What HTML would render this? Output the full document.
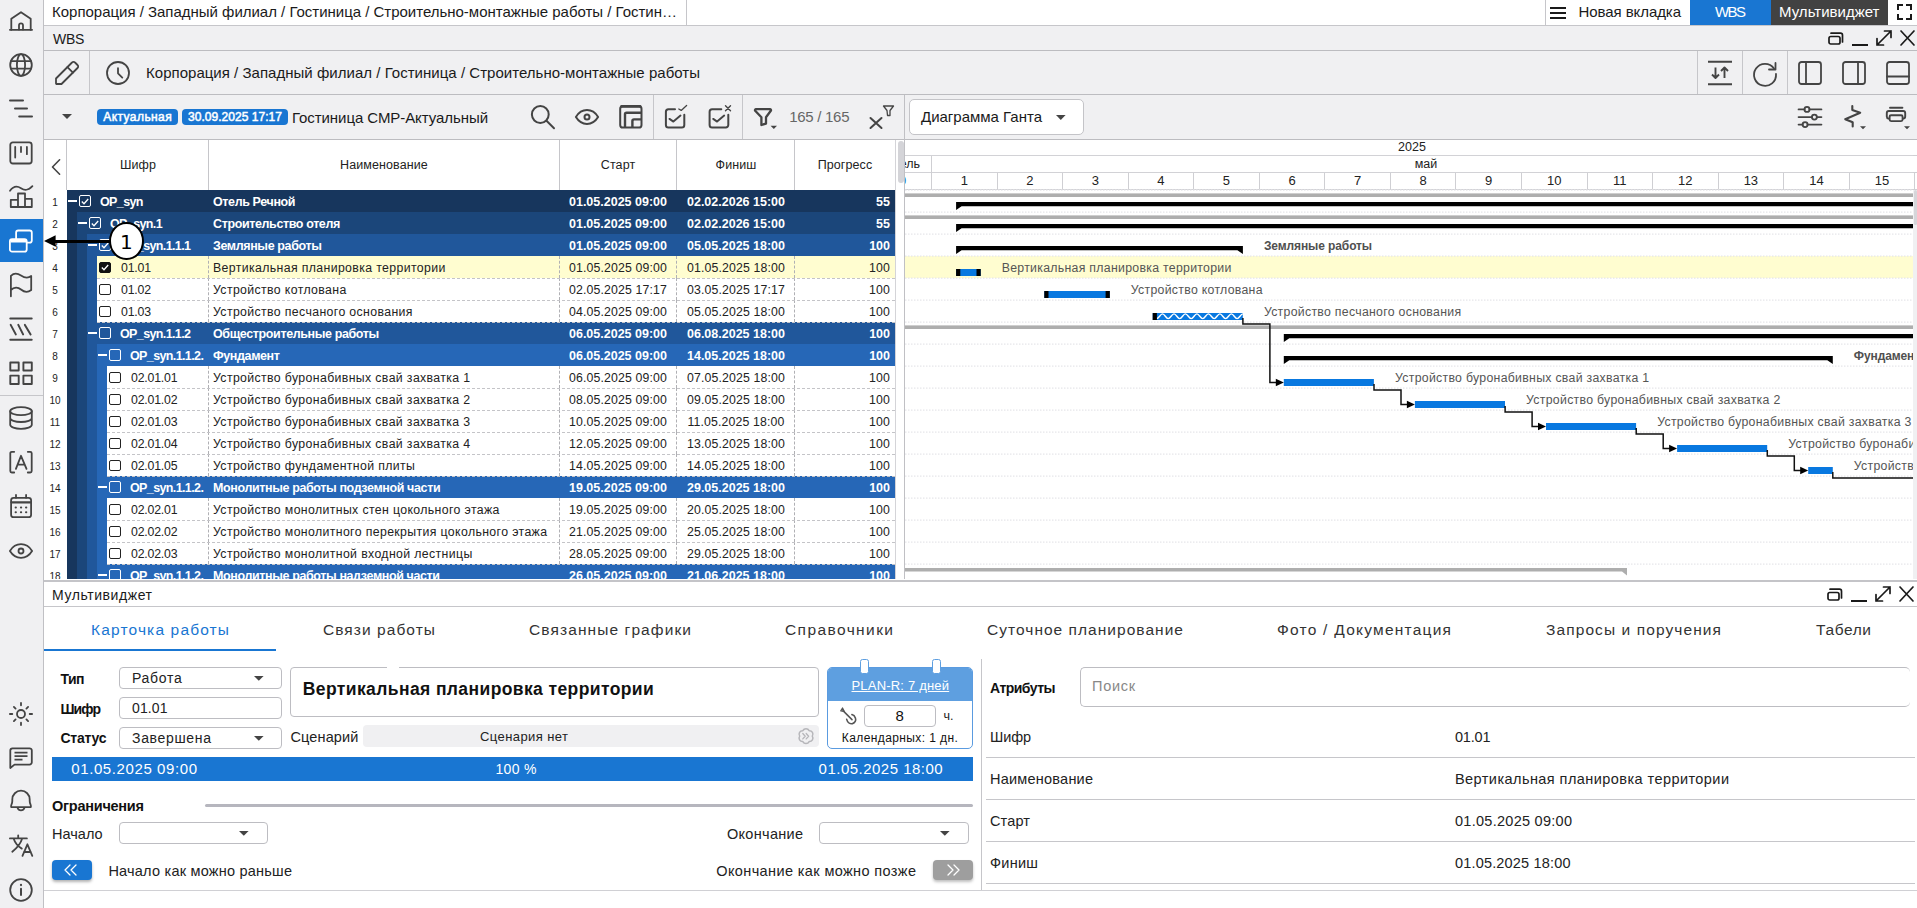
<!DOCTYPE html><html lang="ru"><head><meta charset="utf-8"><title>WBS</title><style>
*{box-sizing:border-box;margin:0;padding:0}
html,body{width:1917px;height:908px;overflow:hidden;background:#fff}
body{font-family:"Liberation Sans",sans-serif;color:#1a1a1a;position:relative;font-size:13px}
.a{position:absolute}
.t{position:absolute;white-space:pre;line-height:1}
.bg{background:#f0f0f2}
.ln{position:absolute;background:#c6c6ca}
svg{position:absolute;overflow:visible}
.ic{fill:none;stroke:#444;stroke-width:1.8;stroke-linecap:round;stroke-linejoin:round}
.row{position:absolute;left:44px;width:851px;height:22px}
.c{position:absolute;top:0.5px;height:22px;line-height:22px;white-space:pre;font-size:12.3px}
.b{font-weight:700;color:#fff;font-size:12.5px;letter-spacing:-0.38px}
.b.code{letter-spacing:-0.62px}
.b.bd{letter-spacing:0}
.n{color:#222;letter-spacing:0.37px}
.n.code{letter-spacing:-0.2px}
.n.d{letter-spacing:0.15px}
.num{position:absolute;left:0;top:1.5px;width:22px;text-align:center;font-size:10px;line-height:22px;color:#222}
.cb{position:absolute;top:5.5px;width:12px;height:11.5px;border:1.2px solid #222;border-radius:2px;background:#fff}
.cbw{position:absolute;top:5px;width:12px;height:12px;border:1.2px solid #fff;border-radius:2px}
.inp{position:absolute;border:1px solid #bdbdc2;border-radius:4px;background:#fff}
.gl{position:absolute;white-space:pre;font-size:12.3px;letter-spacing:0.29px;line-height:14px;color:#555}
</style></head><body>
<div class="a" style="left:0px;top:0px;width:43px;height:908px;background:#f0f0f2;"></div>
<div class="a" style="left:43px;top:0px;width:1px;height:908px;background:#c0c0c4;"></div>
<div class="a" style="left:0px;top:219px;width:43px;height:43px;background:#1976d2;"></div>
<div class="a" style="left:0px;top:395px;width:43px;height:1px;background:#c6c6ca;"></div>
<svg class="ic" style="left:9px;top:8px;" width="24" height="24" viewBox="0 0 24 24"><path d="M2.3 21.8V10.8L12 4.2L21.7 10.8V21.8"/><path d="M0.9 21.8H23.1"/><path d="M10 21.5V17.3A2 2 0 0 1 14 17.3V21.5"/></svg>
<svg class="ic" style="left:9px;top:53px;" width="24" height="24" viewBox="0 0 24 24"><circle cx="12" cy="12" r="10.8"/><ellipse cx="12" cy="12" rx="4.1" ry="10.8"/><path d="M2 8.2H22M2 15.6H22"/></svg>
<svg class="ic" style="left:9px;top:96px;stroke-width:2;" width="24" height="24" viewBox="0 0 24 24"><path d="M1 4.6H14M6 12.6H18M10.2 20.6H23"/></svg>
<svg class="ic" style="left:9px;top:141px;" width="24" height="24" viewBox="0 0 24 24"><rect x="1.3" y="1.3" width="21.4" height="21.2" rx="2.5"/><path d="M6.2 6V16.5M12 6V11M17.9 6V13.2"/></svg>
<svg class="ic" style="left:9px;top:184px;" width="24" height="24" viewBox="0 0 24 24"><path d="M1 6.8C4 2.5 8 1.5 12 4.2S19 6.8 23.4 2.2"/><path d="M1.8 23V15.8H9M9 23V9.5H16V23M16 14.8H22.8V23H1.8"/></svg>
<svg class="ic" style="left:9px;top:229px;stroke:#fff;" width="24" height="24" viewBox="0 0 24 24"><rect x="7.1" y="1.5" width="15.7" height="12.1" rx="2.2"/><rect x="0.9" y="10.2" width="16.8" height="12.4" rx="2.2" fill="#1976d2"/><path d="M1.5 12.2H17" style="stroke-width:2.6;stroke-linecap:butt"/></svg>
<svg class="ic" style="left:9px;top:273px;" width="24" height="24" viewBox="0 0 24 24"><path d="M1.9 23.3V2.8C5 -0.2 8 -0.2 12 2.5S19 5.5 22.2 3V17C19 19.5 15 19 12 16.5S5 14 1.9 17"/></svg>
<svg class="ic" style="left:9px;top:317px;stroke-width:2;" width="24" height="24" viewBox="0 0 24 24"><path d="M1.3 1.5H22.7M1.3 22.7H22.7M1.7 7.9L6.8 17.4M9.3 7.9L14.1 17.4M15.9 7.9L21.6 17.4"/></svg>
<svg class="ic" style="left:9px;top:361px;stroke-width:1.9;" width="24" height="24" viewBox="0 0 24 24"><rect x="1.3" y="1.5" width="8.4" height="8"/><rect x="14.4" y="1.5" width="8.4" height="8"/><rect x="1.3" y="14.6" width="8.4" height="8.4"/><rect x="14.4" y="14.6" width="8.4" height="8.4"/></svg>
<svg class="ic" style="left:9px;top:406px;" width="24" height="24" viewBox="0 0 24 24"><ellipse cx="12" cy="5.2" rx="10.8" ry="4"/><path d="M1.2 5.2V18.8C1.2 21 6 22.8 12 22.8S22.8 21 22.8 18.8V5.2M1.2 12C1.2 14.2 6 16 12 16S22.8 14.2 22.8 12"/></svg>
<svg class="ic" style="left:9px;top:450px;" width="24" height="24" viewBox="0 0 24 24"><path d="M5.2 1.8H2.8A1.5 1.5 0 0 0 1.3 3.3V21A1.5 1.5 0 0 0 2.8 22.5H5.2M18.8 1.8H21.2A1.5 1.5 0 0 1 22.7 3.3V21A1.5 1.5 0 0 1 21.2 22.5H18.8M6.9 18.8L12 5.8L17.5 18.8M8.6 14.6H15.8"/></svg>
<svg class="ic" style="left:9px;top:494px;" width="24" height="24" viewBox="0 0 24 24"><rect x="2.1" y="3.8" width="20" height="19.4" rx="2.5"/><path d="M2.5 8.3H21.7" style="stroke-width:2.2"/><path d="M7 0.9V3.8M17.1 0.9V3.8"/><path d="M6.6 13.5H6.9M11.9 13.5H12.2M17 13.5H17.3M6.6 18.2H6.9M11.9 18.2H12.2M17 18.2H17.3" style="stroke-width:2"/></svg>
<svg class="ic" style="left:9px;top:538.5px;" width="24" height="24" viewBox="0 0 24 24"><path d="M0.9 12C4 7 8 5.2 12 5.2S20 7 23.1 12C20 17 16 18.8 12 18.8S4 17 0.9 12Z"/><circle cx="12" cy="12" r="2.5"/></svg>
<svg class="ic" style="left:9px;top:701.7px;" width="24" height="24" viewBox="0 0 24 24"><circle cx="12" cy="12" r="4"/><path d="M12 0.9V3.3M12 20.7V23.1M0.9 12H3.3M20.7 12H23.1M4.9 4.9L6.6 6.6M17.4 17.4L19.1 19.1M4.9 19.1L6.6 17.4M17.4 6.6L19.1 4.9"/></svg>
<svg class="ic" style="left:9px;top:746px;" width="24" height="24" viewBox="0 0 24 24"><path d="M3.5 2.3H20.5A2.3 2.3 0 0 1 22.8 4.6V16.3A2.3 2.3 0 0 1 20.5 18.6H5.5L1.3 22V4.6A2.3 2.3 0 0 1 3.5 2.3Z"/><path d="M5.5 6.7H18.5M5.5 10.1H18.5M5.5 13.7H13.5" style="stroke-linecap:butt"/></svg>
<svg class="ic" style="left:9px;top:789px;" width="24" height="24" viewBox="0 0 24 24"><path d="M2.3 18.2C1.2 16.5 3.3 15.5 3.3 12V10.4A8.7 8.7 0 0 1 20.7 10.4V12C20.7 15.5 22.8 16.5 21.7 18.2Z"/><path d="M8.6 19A3.6 3.6 0 0 0 15.4 19"/></svg>
<svg class="ic" style="left:9px;top:834px;" width="24" height="24" viewBox="0 0 24 24"><path d="M0.9 4.4H17.9M9.2 1.3V4.4M4.6 4.6C6 9 9 12.5 12.8 14.6M13.2 4.6C11.5 10 7.5 14.5 3.3 17.8"/><path d="M13.5 21.9L18.4 10.3L23.3 21.9M15 18H21.8"/></svg>
<svg class="ic" style="left:9px;top:878px;" width="24" height="24" viewBox="0 0 24 24"><circle cx="12" cy="12" r="10.8"/><path d="M12 10.8V17" style="stroke-width:2"/><path d="M12 6.9V7.1" style="stroke-width:2.2"/></svg>
<div class="a" style="left:44px;top:0px;width:1873px;height:25px;background:#fff;"></div>
<div class="a" style="left:44px;top:25px;width:1873px;height:1px;background:#c6c6ca;"></div>
<div class="t" style="left:52.0px;top:4.3px;font-size:15px;color:#1a1a1a;font-weight:400;letter-spacing:-0.015px;">Корпорация / Западный филиал / Гостиница / Строительно-монтажные работы / Гостин…</div>
<div class="a" style="left:686px;top:0px;width:1px;height:25px;background:#c6c6ca;"></div>
<div class="a" style="left:1545px;top:0px;width:1px;height:25px;background:#c6c6ca;"></div>
<div class="a" style="left:1550px;top:7px;width:16px;height:2px;background:#1a1a1a;"></div>
<div class="a" style="left:1550px;top:12px;width:16px;height:2px;background:#1a1a1a;"></div>
<div class="a" style="left:1550px;top:17px;width:16px;height:2px;background:#1a1a1a;"></div>
<div class="t" style="left:1578.5px;top:4.3px;font-size:15px;color:#1a1a1a;font-weight:400;letter-spacing:-0.074px;">Новая вкладка</div>
<div class="a" style="left:1690px;top:0px;width:81px;height:25px;background:#1976d2;"></div>
<div class="t" style="left:1715.0px;top:4.3px;font-size:15px;color:#fff;font-weight:400;letter-spacing:-1.584px;">WBS</div>
<div class="a" style="left:1771px;top:0px;width:117px;height:25px;background:#424242;"></div>
<div class="t" style="left:1779.0px;top:4.3px;font-size:15px;color:#fff;font-weight:400;letter-spacing:0.015px;">Мультивиджет</div>
<svg class="ic" style="left:1897px;top:4px;stroke:#1a1a1a;stroke-width:2;stroke-linecap:butt;stroke-linejoin:miter" width="15" height="16" viewBox="0 0 15 16"><path d="M1 6V1H6M9 1H14V6M14 10V15H9M6 15H1V10"/></svg>
<div class="a" style="left:44px;top:26px;width:1873px;height:24px;background:#f0f0f2;"></div>
<div class="a" style="left:44px;top:50px;width:1873px;height:1px;background:#bcbcc0;"></div>
<div class="t" style="left:53px;top:32px;font-size:14px;color:#1a1a1a;font-weight:400;letter-spacing:-0.3px;">WBS</div>
<svg class="ic" style="left:1828px;top:32px;stroke:#1a1a1a;stroke-width:1.7" width="16" height="13" viewBox="0 0 16 13"><rect x="1" y="4.5" width="11" height="7.5" rx="1.8"/><path d="M3 1.2H12.5A2 2 0 0 1 14.5 3.2V10"/></svg>
<div class="a" style="left:1852px;top:44.2px;width:16px;height:1.7px;background:#1a1a1a;"></div>
<svg class="ic" style="left:1876px;top:30px;stroke:#1a1a1a;stroke-width:1.7;stroke-linejoin:miter" width="16" height="16" viewBox="0 0 16 16"><path d="M1 15L15 1M8.5 1H15V7.5M1 8.5V15H7.5"/></svg>
<svg class="ic" style="left:1900px;top:30px;stroke:#1a1a1a;stroke-width:1.7" width="15" height="16" viewBox="0 0 15 16"><path d="M1 1L14 15M14 1L1 15"/></svg>
<div class="a" style="left:44px;top:51px;width:1873px;height:43px;background:#f0f0f2;"></div>
<div class="a" style="left:44px;top:94px;width:1873px;height:1px;background:#bcbcc0;"></div>
<div class="a" style="left:89px;top:51px;width:1px;height:43px;background:#c6c6ca;"></div>
<svg class="ic" style="left:55px;top:61px;" width="24" height="24" viewBox="0 0 24 24"><path d="M1 22.5V17.5L17 1.5A2 2 0 0 1 20 1.5L22.5 4A2 2 0 0 1 22.5 7L6.5 23H1.5Z"/><path d="M12.4 6.1L17.9 11.6"/></svg>
<svg class="ic" style="left:106px;top:61px;" width="24" height="24" viewBox="0 0 24 24"><circle cx="12" cy="12" r="11"/><path d="M12 7.2V12.3L16.3 16.6"/></svg>
<div class="t" style="left:146px;top:65px;font-size:15px;color:#1a1a1a;font-weight:400;letter-spacing:0.026px;">Корпорация / Западный филиал / Гостиница / Строительно-монтажные работы</div>
<div class="a" style="left:1697px;top:51px;width:1px;height:43px;background:#c6c6ca;"></div>
<div class="a" style="left:1742px;top:51px;width:1px;height:43px;background:#c6c6ca;"></div>
<div class="a" style="left:1787px;top:51px;width:1px;height:43px;background:#c6c6ca;"></div>
<svg class="ic" style="left:1708px;top:61px;stroke-linecap:butt;stroke-width:1.9" width="24" height="24" viewBox="0 0 24 24"><path d="M0 0.8H24M0 23.2H24"/><path d="M7.5 6.5V16.5M4 13.5L7.5 17L11 13.5M16.5 17V7M13 10L16.5 6.5L20 10"/></svg>
<svg class="ic" style="left:1753px;top:61.5px;" width="24" height="24" viewBox="0 0 24 24"><path d="M21 6.5A11 11 0 1 0 23 12"/><path d="M22.5 1V7.5H16"/></svg>
<svg class="ic" style="left:1798px;top:61px;" width="24" height="24" viewBox="0 0 24 24"><rect x="1" y="1" width="22" height="22" rx="2.5"/><path d="M8 1V23"/></svg>
<svg class="ic" style="left:1842px;top:61px;" width="24" height="24" viewBox="0 0 24 24"><rect x="1" y="1" width="22" height="22" rx="2.5"/><path d="M16 1V23"/></svg>
<svg class="ic" style="left:1886px;top:61px;" width="24" height="24" viewBox="0 0 24 24"><rect x="1" y="1" width="22" height="22" rx="2.5"/><path d="M1 15.5H23"/></svg>
<div class="a" style="left:44px;top:95px;width:1873px;height:44px;background:#f0f0f2;"></div>
<div class="a" style="left:44px;top:139px;width:1873px;height:1px;background:#bcbcc0;"></div>
<svg class="" style="left:62px;top:114px;fill:#444" width="10" height="5" viewBox="0 0 10 5"><path d="M0 0H10L5 5Z"/></svg>
<div class="a" style="left:97px;top:109px;width:81px;height:16px;background:#1976d2;border-radius:4px"></div>
<div class="t" style="left:103.3px;top:111.1px;font-size:12px;color:#fff;font-weight:400;letter-spacing:0.421px;-webkit-text-stroke:0.5px #fff">Актуальная</div>
<div class="a" style="left:182px;top:109px;width:106px;height:16px;background:#1976d2;border-radius:4px"></div>
<div class="t" style="left:188.1px;top:111.1px;font-size:12px;color:#fff;font-weight:400;letter-spacing:0.025px;-webkit-text-stroke:0.5px #fff">30.09.2025 17:17</div>
<div class="t" style="left:292.0px;top:110.2px;font-size:15px;color:#1a1a1a;font-weight:400;letter-spacing:-0.069px;">Гостиница СМР-Актуальный</div>
<svg class="ic" style="left:531px;top:105px;stroke-width:2" width="24" height="24" viewBox="0 0 24 24"><circle cx="9.3" cy="9.5" r="8.4"/><path d="M15.5 15.7L23 23.2"/></svg>
<svg class="ic" style="left:575px;top:104.8px;stroke-width:2" width="24" height="24" viewBox="0 0 24 24"><path d="M0.9 12C4 7 8 5.1 12 5.1S20 7 23.1 12C20 17 16 18.9 12 18.9S4 17 0.9 12Z"/><circle cx="12" cy="12" r="2.5"/></svg>
<svg class="ic" style="left:617px;top:103px;stroke-width:2" width="28" height="28" viewBox="617 103 28 28"><rect x="620.2" y="106.2" width="21.3" height="21.3" rx="2.6"/><path d="M621.5 106.4H640.2" style="stroke-width:2.6"/><path d="M625 127.3V114.3A1.6 1.6 0 0 1 626.6 112.7H641.3M632.4 127.3V121A1.6 1.6 0 0 1 634 119.4H641.3" style="stroke-width:2.4;stroke-linecap:butt"/></svg>
<div class="a" style="left:653px;top:95px;width:1px;height:44px;background:#c6c6ca;"></div>
<svg class="ic" style="left:662px;top:102px;" width="28" height="28" viewBox="662 102 28 28"><path d="M675 109.2H668.4A2.5 2.5 0 0 0 665.9 111.7V125A2.5 2.5 0 0 0 668.4 127.5H681.8A2.5 2.5 0 0 0 684.3 125V114.8" style="stroke-width:2"/><path d="M669.5 118.9L673.4 121.6L680.5 115.6" style="stroke-width:1.9"/><path d="M678.8 109L681.2 110.4L686.6 105.5" style="stroke-width:1.3"/></svg>
<svg class="ic" style="left:706px;top:102px;" width="28" height="28" viewBox="706 102 28 28"><path d="M721.3 109.2H712.1A2.5 2.5 0 0 0 709.6 111.7V125A2.5 2.5 0 0 0 712.1 127.5H725.8A2.5 2.5 0 0 0 728.3 125V114.8" style="stroke-width:2"/><path d="M713.2 118.9L717.1 121.6L724.2 115.6" style="stroke-width:1.9"/><path d="M725.5 105.7L730.5 110.7M730.5 105.7L725.5 110.7" style="stroke-width:1.4"/></svg>
<div class="a" style="left:742px;top:95px;width:1px;height:44px;background:#c6c6ca;"></div>
<svg class="ic" style="left:750px;top:104px;" width="30" height="28" viewBox="750 104 30 28"><path d="M756 109.2H770A1 1 0 0 1 770.8 110.8L766 117.3V123.6L761.4 125V117.3L755.2 110.8A1 1 0 0 1 756 109.2Z" style="stroke-width:2.3"/><path d="M770.6 125.7H777L773.8 129Z" fill="#444" stroke="none"/></svg>
<div class="t" style="left:789.2px;top:109.1px;font-size:15px;color:#666;font-weight:400;letter-spacing:-0.282px;">165 / 165</div>
<svg class="ic" style="left:869px;top:105px;" width="26" height="24" viewBox="0 0 26 24"><path d="M1.5 13L12.5 23M12.5 13L1.5 23" style="stroke-width:2"/><path d="M14.5 1H24.5L21 5.5V10.5H18.5L18 5.5Z" style="stroke-width:1.3"/></svg>
<div class="a" style="left:895px;top:95px;width:10px;height:44px;background:#f0f0f2;"></div>
<div class="a" style="left:904px;top:95px;width:1px;height:485px;background:#c0c0c4;"></div>
<div class="inp" style="left:909px;top:99px;width:175px;height:36px;border-color:#c4c4c8;border-radius:5px"></div>
<div class="t" style="left:921.0px;top:109.0px;font-size:15px;color:#1a1a1a;font-weight:400;letter-spacing:-0.009px;">Диаграмма Ганта</div>
<svg class="" style="left:1056px;top:115.2px;fill:#444" width="9.6" height="5" viewBox="0 0 9.6 5"><path d="M0 0H9.6L4.8 5Z"/></svg>
<svg class="ic" style="left:1796px;top:104px;stroke-width:1.9" width="28" height="26" viewBox="1796 104 28 26"><path d="M1798.6 109.4H1804.4M1809.6 109.4H1821.4M1798.6 117.1H1811.8M1817 117.1H1821.4M1798.6 124.6H1802.5M1807.7 124.6H1821.4"/><circle cx="1807" cy="109.4" r="2.5"/><circle cx="1814.4" cy="117.1" r="2.5"/><circle cx="1805.1" cy="124.6" r="2.5"/></svg>
<svg class="ic" style="left:1842px;top:103px;" width="28" height="28" viewBox="1842 103 28 28"><path d="M1852.3 106V109.9L1860.2 112.7L1845.2 119.2L1852.7 122.3V126.5" style="stroke-width:2.1"/><path d="M1860 126.2H1866L1863 129.2Z" fill="#444" stroke="none"/></svg>
<svg class="ic" style="left:1884px;top:104px;stroke-width:1.9" width="30" height="28" viewBox="1884 104 30 28"><path d="M1890 107.8H1902.4"/><path d="M1889 118.6H1888.5A2 2 0 0 1 1886.8 116.6V113A2 2 0 0 1 1888.8 111H1903.2A2 2 0 0 1 1905.2 113V116.6A2 2 0 0 1 1903.2 118.6H1903"/><rect x="1889.6" y="115.3" width="13" height="5.8" rx="1.5"/><path d="M1904 126.2H1910L1907 129.2Z" fill="#444" stroke="none"/></svg>
<div class="a" style="left:44px;top:140px;width:851px;height:50px;background:#fff;"></div>
<div class="a" style="left:66px;top:140px;width:1px;height:50px;background:#c6c6ca;"></div>
<div class="a" style="left:208px;top:140px;width:1px;height:50px;background:#c6c6ca;"></div>
<div class="a" style="left:559px;top:140px;width:1px;height:50px;background:#c6c6ca;"></div>
<div class="a" style="left:676px;top:140px;width:1px;height:50px;background:#c6c6ca;"></div>
<div class="a" style="left:794px;top:140px;width:1px;height:50px;background:#c6c6ca;"></div>
<svg class="ic" style="left:48px;top:155px;stroke-width:1.6" width="16" height="24" viewBox="48 155 16 24"><path d="M59.6 159.8L52.5 167L59.6 174.2"/></svg>
<div class="t" style="left:38px;width:200px;text-align:center;top:159px;font-size:12.5px;color:#222;letter-spacing:0.1px">Шифр</div>
<div class="t" style="left:284px;width:200px;text-align:center;top:159px;font-size:12.5px;color:#222;letter-spacing:0.1px">Наименование</div>
<div class="t" style="left:518px;width:200px;text-align:center;top:159px;font-size:12.5px;color:#222;letter-spacing:0.1px">Старт</div>
<div class="t" style="left:636px;width:200px;text-align:center;top:159px;font-size:12.5px;color:#222;letter-spacing:0.1px">Финиш</div>
<div class="t" style="left:745px;width:200px;text-align:center;top:159px;font-size:12.5px;color:#222;letter-spacing:0.1px">Прогресс</div>
<div class="a" style="left:895px;top:140px;width:1px;height:439px;background:#d4d4d8;"></div>
<div class="a" style="left:898px;top:141px;width:6px;height:42px;background:#d4d4d8;border-radius:3px"></div>
<div class="a" style="left:0;top:190px;width:905px;height:389px;overflow:hidden">
<div class="row" style="top:0px;background:#fff">
<div class="num">1</div>
<div class="a" style="left:23px;top:0;width:828px;height:22px;background:#17365d"></div>
<div class="a" style="left:24px;top:10px;width:9px;height:2px;background:#fff"></div>
<div class="cbw" style="left:35px"><svg style="left:1.2px;top:1.5px" width="8" height="7" viewBox="0 0 8 7"><path d="M0.8 3.5L3 5.8L7.2 1" fill="none" stroke="#fff" stroke-width="1.3"/></svg></div>
<div class="c b code" style="left:56px;width:107px;overflow:hidden">OP_syn</div>
<div class="c b" style="left:169px;width:345px;overflow:hidden">Отель Речной</div>
<div class="c b bd" style="left:516px;width:116px;text-align:center">01.05.2025 09:00</div>
<div class="c b bd" style="left:633px;width:118px;text-align:center">02.02.2026 15:00</div>
<div class="c b bd" style="left:751px;width:95px;text-align:right">55</div>
</div>
<div class="row" style="top:22px;background:#fff">
<div class="num">2</div>
<div class="a" style="left:23px;top:0;width:10px;height:22px;background:#17365d"></div>
<div class="a" style="left:33px;top:0;width:818px;height:22px;background:#1b467a"></div>
<div class="a" style="left:34px;top:10px;width:9px;height:2px;background:#fff"></div>
<div class="cbw" style="left:45px"><svg style="left:1.2px;top:1.5px" width="8" height="7" viewBox="0 0 8 7"><path d="M0.8 3.5L3 5.8L7.2 1" fill="none" stroke="#fff" stroke-width="1.3"/></svg></div>
<div class="c b code" style="left:66px;width:97px;overflow:hidden">OP_syn.1</div>
<div class="c b" style="left:169px;width:345px;overflow:hidden">Строительство отеля</div>
<div class="c b bd" style="left:516px;width:116px;text-align:center">01.05.2025 09:00</div>
<div class="c b bd" style="left:633px;width:118px;text-align:center">02.02.2026 15:00</div>
<div class="c b bd" style="left:751px;width:95px;text-align:right">55</div>
</div>
<div class="row" style="top:44px;background:#fff">
<div class="num">3</div>
<div class="a" style="left:23px;top:0;width:10px;height:22px;background:#17365d"></div>
<div class="a" style="left:33px;top:0;width:10px;height:22px;background:#1b467a"></div>
<div class="a" style="left:43px;top:0;width:808px;height:22px;background:#20579b"></div>
<div class="a" style="left:44px;top:10px;width:9px;height:2px;background:#fff"></div>
<div class="cbw" style="left:55px"><svg style="left:1.2px;top:1.5px" width="8" height="7" viewBox="0 0 8 7"><path d="M0.8 3.5L3 5.8L7.2 1" fill="none" stroke="#fff" stroke-width="1.3"/></svg></div>
<div class="c b code" style="left:76px;width:87px;overflow:hidden">OP_syn.1.1.1</div>
<div class="c b" style="left:169px;width:345px;overflow:hidden">Земляные работы</div>
<div class="c b bd" style="left:516px;width:116px;text-align:center">01.05.2025 09:00</div>
<div class="c b bd" style="left:633px;width:118px;text-align:center">05.05.2025 18:00</div>
<div class="c b bd" style="left:751px;width:95px;text-align:right">100</div>
</div>
<div class="row" style="top:66px;background:#fff">
<div class="num">4</div>
<div class="a" style="left:23px;top:0;width:10px;height:22px;background:#17365d"></div>
<div class="a" style="left:33px;top:0;width:10px;height:22px;background:#1b467a"></div>
<div class="a" style="left:43px;top:0;width:10px;height:22px;background:#20579b"></div>
<div class="a" style="left:53px;top:0;width:798px;height:22px;background:#fffdd0"></div>
<div class="a" style="left:53px;top:22px;width:798px;height:0;border-top:1px dashed #c4c4c8;z-index:2"></div>
<div class="a" style="left:164px;top:0;width:0;height:22px;border-left:1px dashed #b0b0b4"></div>
<div class="a" style="left:515px;top:0;width:0;height:22px;border-left:1px dashed #b0b0b4"></div>
<div class="a" style="left:632px;top:0;width:0;height:22px;border-left:1px dashed #b0b0b4"></div>
<div class="a" style="left:750px;top:0;width:0;height:22px;border-left:1px dashed #b0b0b4"></div>
<div class="cb" style="left:55px;background:#111;border-color:#111"><svg style="left:1.2px;top:1.5px" width="8" height="7" viewBox="0 0 8 7"><path d="M0.8 3.5L3 5.8L7.2 1" fill="none" stroke="#fff" stroke-width="1.3"/></svg></div>
<div class="c n code" style="left:77px;width:86px;overflow:hidden">01.01</div>
<div class="c n" style="left:169px;width:345px;overflow:hidden">Вертикальная планировка территории</div>
<div class="c n d" style="left:516px;width:116px;text-align:center">01.05.2025 09:00</div>
<div class="c n d" style="left:633px;width:118px;text-align:center">01.05.2025 18:00</div>
<div class="c n d" style="left:751px;width:95px;text-align:right">100</div>
</div>
<div class="row" style="top:88px;background:#fff">
<div class="num">5</div>
<div class="a" style="left:23px;top:0;width:10px;height:22px;background:#17365d"></div>
<div class="a" style="left:33px;top:0;width:10px;height:22px;background:#1b467a"></div>
<div class="a" style="left:43px;top:0;width:10px;height:22px;background:#20579b"></div>
<div class="a" style="left:53px;top:0;width:798px;height:22px;background:#fff"></div>
<div class="a" style="left:53px;top:22px;width:798px;height:0;border-top:1px dashed #c4c4c8;z-index:2"></div>
<div class="a" style="left:164px;top:0;width:0;height:22px;border-left:1px dashed #b0b0b4"></div>
<div class="a" style="left:515px;top:0;width:0;height:22px;border-left:1px dashed #b0b0b4"></div>
<div class="a" style="left:632px;top:0;width:0;height:22px;border-left:1px dashed #b0b0b4"></div>
<div class="a" style="left:750px;top:0;width:0;height:22px;border-left:1px dashed #b0b0b4"></div>
<div class="cb" style="left:55px"></div>
<div class="c n code" style="left:77px;width:86px;overflow:hidden">01.02</div>
<div class="c n" style="left:169px;width:345px;overflow:hidden">Устройство котлована</div>
<div class="c n d" style="left:516px;width:116px;text-align:center">02.05.2025 17:17</div>
<div class="c n d" style="left:633px;width:118px;text-align:center">03.05.2025 17:17</div>
<div class="c n d" style="left:751px;width:95px;text-align:right">100</div>
</div>
<div class="row" style="top:110px;background:#fff">
<div class="num">6</div>
<div class="a" style="left:23px;top:0;width:10px;height:22px;background:#17365d"></div>
<div class="a" style="left:33px;top:0;width:10px;height:22px;background:#1b467a"></div>
<div class="a" style="left:43px;top:0;width:10px;height:22px;background:#20579b"></div>
<div class="a" style="left:53px;top:0;width:798px;height:22px;background:#fff"></div>
<div class="a" style="left:53px;top:22px;width:798px;height:0;border-top:1px dashed #c4c4c8;z-index:2"></div>
<div class="a" style="left:164px;top:0;width:0;height:22px;border-left:1px dashed #b0b0b4"></div>
<div class="a" style="left:515px;top:0;width:0;height:22px;border-left:1px dashed #b0b0b4"></div>
<div class="a" style="left:632px;top:0;width:0;height:22px;border-left:1px dashed #b0b0b4"></div>
<div class="a" style="left:750px;top:0;width:0;height:22px;border-left:1px dashed #b0b0b4"></div>
<div class="cb" style="left:55px"></div>
<div class="c n code" style="left:77px;width:86px;overflow:hidden">01.03</div>
<div class="c n" style="left:169px;width:345px;overflow:hidden">Устройство песчаного основания</div>
<div class="c n d" style="left:516px;width:116px;text-align:center">04.05.2025 09:00</div>
<div class="c n d" style="left:633px;width:118px;text-align:center">05.05.2025 18:00</div>
<div class="c n d" style="left:751px;width:95px;text-align:right">100</div>
</div>
<div class="row" style="top:132px;background:#fff">
<div class="num">7</div>
<div class="a" style="left:23px;top:0;width:10px;height:22px;background:#17365d"></div>
<div class="a" style="left:33px;top:0;width:10px;height:22px;background:#1b467a"></div>
<div class="a" style="left:43px;top:0;width:808px;height:22px;background:#20579b"></div>
<div class="a" style="left:44px;top:10px;width:9px;height:2px;background:#fff"></div>
<div class="cbw" style="left:55px"></div>
<div class="c b code" style="left:76px;width:87px;overflow:hidden">OP_syn.1.1.2</div>
<div class="c b" style="left:169px;width:345px;overflow:hidden">Общестроительные работы</div>
<div class="c b bd" style="left:516px;width:116px;text-align:center">06.05.2025 09:00</div>
<div class="c b bd" style="left:633px;width:118px;text-align:center">06.08.2025 18:00</div>
<div class="c b bd" style="left:751px;width:95px;text-align:right">100</div>
</div>
<div class="row" style="top:154px;background:#fff">
<div class="num">8</div>
<div class="a" style="left:23px;top:0;width:10px;height:22px;background:#17365d"></div>
<div class="a" style="left:33px;top:0;width:10px;height:22px;background:#1b467a"></div>
<div class="a" style="left:43px;top:0;width:10px;height:22px;background:#20579b"></div>
<div class="a" style="left:53px;top:0;width:798px;height:22px;background:#2667b7"></div>
<div class="a" style="left:54px;top:10px;width:9px;height:2px;background:#fff"></div>
<div class="cbw" style="left:65px"></div>
<div class="c b code" style="left:86px;width:77px;overflow:hidden">OP_syn.1.1.2.</div>
<div class="c b" style="left:169px;width:345px;overflow:hidden">Фундамент</div>
<div class="c b bd" style="left:516px;width:116px;text-align:center">06.05.2025 09:00</div>
<div class="c b bd" style="left:633px;width:118px;text-align:center">14.05.2025 18:00</div>
<div class="c b bd" style="left:751px;width:95px;text-align:right">100</div>
</div>
<div class="row" style="top:176px;background:#fff">
<div class="num">9</div>
<div class="a" style="left:23px;top:0;width:10px;height:22px;background:#17365d"></div>
<div class="a" style="left:33px;top:0;width:10px;height:22px;background:#1b467a"></div>
<div class="a" style="left:43px;top:0;width:10px;height:22px;background:#20579b"></div>
<div class="a" style="left:53px;top:0;width:10px;height:22px;background:#2667b7"></div>
<div class="a" style="left:63px;top:0;width:788px;height:22px;background:#fff"></div>
<div class="a" style="left:63px;top:22px;width:788px;height:0;border-top:1px dashed #c4c4c8;z-index:2"></div>
<div class="a" style="left:164px;top:0;width:0;height:22px;border-left:1px dashed #b0b0b4"></div>
<div class="a" style="left:515px;top:0;width:0;height:22px;border-left:1px dashed #b0b0b4"></div>
<div class="a" style="left:632px;top:0;width:0;height:22px;border-left:1px dashed #b0b0b4"></div>
<div class="a" style="left:750px;top:0;width:0;height:22px;border-left:1px dashed #b0b0b4"></div>
<div class="cb" style="left:65px"></div>
<div class="c n code" style="left:87px;width:76px;overflow:hidden">02.01.01</div>
<div class="c n" style="left:169px;width:345px;overflow:hidden">Устройство буронабивных свай захватка 1</div>
<div class="c n d" style="left:516px;width:116px;text-align:center">06.05.2025 09:00</div>
<div class="c n d" style="left:633px;width:118px;text-align:center">07.05.2025 18:00</div>
<div class="c n d" style="left:751px;width:95px;text-align:right">100</div>
</div>
<div class="row" style="top:198px;background:#fff">
<div class="num">10</div>
<div class="a" style="left:23px;top:0;width:10px;height:22px;background:#17365d"></div>
<div class="a" style="left:33px;top:0;width:10px;height:22px;background:#1b467a"></div>
<div class="a" style="left:43px;top:0;width:10px;height:22px;background:#20579b"></div>
<div class="a" style="left:53px;top:0;width:10px;height:22px;background:#2667b7"></div>
<div class="a" style="left:63px;top:0;width:788px;height:22px;background:#fff"></div>
<div class="a" style="left:63px;top:22px;width:788px;height:0;border-top:1px dashed #c4c4c8;z-index:2"></div>
<div class="a" style="left:164px;top:0;width:0;height:22px;border-left:1px dashed #b0b0b4"></div>
<div class="a" style="left:515px;top:0;width:0;height:22px;border-left:1px dashed #b0b0b4"></div>
<div class="a" style="left:632px;top:0;width:0;height:22px;border-left:1px dashed #b0b0b4"></div>
<div class="a" style="left:750px;top:0;width:0;height:22px;border-left:1px dashed #b0b0b4"></div>
<div class="cb" style="left:65px"></div>
<div class="c n code" style="left:87px;width:76px;overflow:hidden">02.01.02</div>
<div class="c n" style="left:169px;width:345px;overflow:hidden">Устройство буронабивных свай захватка 2</div>
<div class="c n d" style="left:516px;width:116px;text-align:center">08.05.2025 09:00</div>
<div class="c n d" style="left:633px;width:118px;text-align:center">09.05.2025 18:00</div>
<div class="c n d" style="left:751px;width:95px;text-align:right">100</div>
</div>
<div class="row" style="top:220px;background:#fff">
<div class="num">11</div>
<div class="a" style="left:23px;top:0;width:10px;height:22px;background:#17365d"></div>
<div class="a" style="left:33px;top:0;width:10px;height:22px;background:#1b467a"></div>
<div class="a" style="left:43px;top:0;width:10px;height:22px;background:#20579b"></div>
<div class="a" style="left:53px;top:0;width:10px;height:22px;background:#2667b7"></div>
<div class="a" style="left:63px;top:0;width:788px;height:22px;background:#fff"></div>
<div class="a" style="left:63px;top:22px;width:788px;height:0;border-top:1px dashed #c4c4c8;z-index:2"></div>
<div class="a" style="left:164px;top:0;width:0;height:22px;border-left:1px dashed #b0b0b4"></div>
<div class="a" style="left:515px;top:0;width:0;height:22px;border-left:1px dashed #b0b0b4"></div>
<div class="a" style="left:632px;top:0;width:0;height:22px;border-left:1px dashed #b0b0b4"></div>
<div class="a" style="left:750px;top:0;width:0;height:22px;border-left:1px dashed #b0b0b4"></div>
<div class="cb" style="left:65px"></div>
<div class="c n code" style="left:87px;width:76px;overflow:hidden">02.01.03</div>
<div class="c n" style="left:169px;width:345px;overflow:hidden">Устройство буронабивных свай захватка 3</div>
<div class="c n d" style="left:516px;width:116px;text-align:center">10.05.2025 09:00</div>
<div class="c n d" style="left:633px;width:118px;text-align:center">11.05.2025 18:00</div>
<div class="c n d" style="left:751px;width:95px;text-align:right">100</div>
</div>
<div class="row" style="top:242px;background:#fff">
<div class="num">12</div>
<div class="a" style="left:23px;top:0;width:10px;height:22px;background:#17365d"></div>
<div class="a" style="left:33px;top:0;width:10px;height:22px;background:#1b467a"></div>
<div class="a" style="left:43px;top:0;width:10px;height:22px;background:#20579b"></div>
<div class="a" style="left:53px;top:0;width:10px;height:22px;background:#2667b7"></div>
<div class="a" style="left:63px;top:0;width:788px;height:22px;background:#fff"></div>
<div class="a" style="left:63px;top:22px;width:788px;height:0;border-top:1px dashed #c4c4c8;z-index:2"></div>
<div class="a" style="left:164px;top:0;width:0;height:22px;border-left:1px dashed #b0b0b4"></div>
<div class="a" style="left:515px;top:0;width:0;height:22px;border-left:1px dashed #b0b0b4"></div>
<div class="a" style="left:632px;top:0;width:0;height:22px;border-left:1px dashed #b0b0b4"></div>
<div class="a" style="left:750px;top:0;width:0;height:22px;border-left:1px dashed #b0b0b4"></div>
<div class="cb" style="left:65px"></div>
<div class="c n code" style="left:87px;width:76px;overflow:hidden">02.01.04</div>
<div class="c n" style="left:169px;width:345px;overflow:hidden">Устройство буронабивных свай захватка 4</div>
<div class="c n d" style="left:516px;width:116px;text-align:center">12.05.2025 09:00</div>
<div class="c n d" style="left:633px;width:118px;text-align:center">13.05.2025 18:00</div>
<div class="c n d" style="left:751px;width:95px;text-align:right">100</div>
</div>
<div class="row" style="top:264px;background:#fff">
<div class="num">13</div>
<div class="a" style="left:23px;top:0;width:10px;height:22px;background:#17365d"></div>
<div class="a" style="left:33px;top:0;width:10px;height:22px;background:#1b467a"></div>
<div class="a" style="left:43px;top:0;width:10px;height:22px;background:#20579b"></div>
<div class="a" style="left:53px;top:0;width:10px;height:22px;background:#2667b7"></div>
<div class="a" style="left:63px;top:0;width:788px;height:22px;background:#fff"></div>
<div class="a" style="left:63px;top:22px;width:788px;height:0;border-top:1px dashed #c4c4c8;z-index:2"></div>
<div class="a" style="left:164px;top:0;width:0;height:22px;border-left:1px dashed #b0b0b4"></div>
<div class="a" style="left:515px;top:0;width:0;height:22px;border-left:1px dashed #b0b0b4"></div>
<div class="a" style="left:632px;top:0;width:0;height:22px;border-left:1px dashed #b0b0b4"></div>
<div class="a" style="left:750px;top:0;width:0;height:22px;border-left:1px dashed #b0b0b4"></div>
<div class="cb" style="left:65px"></div>
<div class="c n code" style="left:87px;width:76px;overflow:hidden">02.01.05</div>
<div class="c n" style="left:169px;width:345px;overflow:hidden">Устройство фундаментной плиты</div>
<div class="c n d" style="left:516px;width:116px;text-align:center">14.05.2025 09:00</div>
<div class="c n d" style="left:633px;width:118px;text-align:center">14.05.2025 18:00</div>
<div class="c n d" style="left:751px;width:95px;text-align:right">100</div>
</div>
<div class="row" style="top:286px;background:#fff">
<div class="num">14</div>
<div class="a" style="left:23px;top:0;width:10px;height:22px;background:#17365d"></div>
<div class="a" style="left:33px;top:0;width:10px;height:22px;background:#1b467a"></div>
<div class="a" style="left:43px;top:0;width:10px;height:22px;background:#20579b"></div>
<div class="a" style="left:53px;top:0;width:798px;height:22px;background:#2667b7"></div>
<div class="a" style="left:54px;top:10px;width:9px;height:2px;background:#fff"></div>
<div class="cbw" style="left:65px"></div>
<div class="c b code" style="left:86px;width:77px;overflow:hidden">OP_syn.1.1.2.</div>
<div class="c b" style="left:169px;width:345px;overflow:hidden">Монолитные работы подземной части</div>
<div class="c b bd" style="left:516px;width:116px;text-align:center">19.05.2025 09:00</div>
<div class="c b bd" style="left:633px;width:118px;text-align:center">29.05.2025 18:00</div>
<div class="c b bd" style="left:751px;width:95px;text-align:right">100</div>
</div>
<div class="row" style="top:308px;background:#fff">
<div class="num">15</div>
<div class="a" style="left:23px;top:0;width:10px;height:22px;background:#17365d"></div>
<div class="a" style="left:33px;top:0;width:10px;height:22px;background:#1b467a"></div>
<div class="a" style="left:43px;top:0;width:10px;height:22px;background:#20579b"></div>
<div class="a" style="left:53px;top:0;width:10px;height:22px;background:#2667b7"></div>
<div class="a" style="left:63px;top:0;width:788px;height:22px;background:#fff"></div>
<div class="a" style="left:63px;top:22px;width:788px;height:0;border-top:1px dashed #c4c4c8;z-index:2"></div>
<div class="a" style="left:164px;top:0;width:0;height:22px;border-left:1px dashed #b0b0b4"></div>
<div class="a" style="left:515px;top:0;width:0;height:22px;border-left:1px dashed #b0b0b4"></div>
<div class="a" style="left:632px;top:0;width:0;height:22px;border-left:1px dashed #b0b0b4"></div>
<div class="a" style="left:750px;top:0;width:0;height:22px;border-left:1px dashed #b0b0b4"></div>
<div class="cb" style="left:65px"></div>
<div class="c n code" style="left:87px;width:76px;overflow:hidden">02.02.01</div>
<div class="c n" style="left:169px;width:345px;overflow:hidden">Устройство монолитных стен цокольного этажа</div>
<div class="c n d" style="left:516px;width:116px;text-align:center">19.05.2025 09:00</div>
<div class="c n d" style="left:633px;width:118px;text-align:center">20.05.2025 18:00</div>
<div class="c n d" style="left:751px;width:95px;text-align:right">100</div>
</div>
<div class="row" style="top:330px;background:#fff">
<div class="num">16</div>
<div class="a" style="left:23px;top:0;width:10px;height:22px;background:#17365d"></div>
<div class="a" style="left:33px;top:0;width:10px;height:22px;background:#1b467a"></div>
<div class="a" style="left:43px;top:0;width:10px;height:22px;background:#20579b"></div>
<div class="a" style="left:53px;top:0;width:10px;height:22px;background:#2667b7"></div>
<div class="a" style="left:63px;top:0;width:788px;height:22px;background:#fff"></div>
<div class="a" style="left:63px;top:22px;width:788px;height:0;border-top:1px dashed #c4c4c8;z-index:2"></div>
<div class="a" style="left:164px;top:0;width:0;height:22px;border-left:1px dashed #b0b0b4"></div>
<div class="a" style="left:515px;top:0;width:0;height:22px;border-left:1px dashed #b0b0b4"></div>
<div class="a" style="left:632px;top:0;width:0;height:22px;border-left:1px dashed #b0b0b4"></div>
<div class="a" style="left:750px;top:0;width:0;height:22px;border-left:1px dashed #b0b0b4"></div>
<div class="cb" style="left:65px"></div>
<div class="c n code" style="left:87px;width:76px;overflow:hidden">02.02.02</div>
<div class="c n" style="left:169px;width:345px;overflow:hidden">Устройство монолитного перекрытия цокольного этажа</div>
<div class="c n d" style="left:516px;width:116px;text-align:center">21.05.2025 09:00</div>
<div class="c n d" style="left:633px;width:118px;text-align:center">25.05.2025 18:00</div>
<div class="c n d" style="left:751px;width:95px;text-align:right">100</div>
</div>
<div class="row" style="top:352px;background:#fff">
<div class="num">17</div>
<div class="a" style="left:23px;top:0;width:10px;height:22px;background:#17365d"></div>
<div class="a" style="left:33px;top:0;width:10px;height:22px;background:#1b467a"></div>
<div class="a" style="left:43px;top:0;width:10px;height:22px;background:#20579b"></div>
<div class="a" style="left:53px;top:0;width:10px;height:22px;background:#2667b7"></div>
<div class="a" style="left:63px;top:0;width:788px;height:22px;background:#fff"></div>
<div class="a" style="left:63px;top:22px;width:788px;height:0;border-top:1px dashed #c4c4c8;z-index:2"></div>
<div class="a" style="left:164px;top:0;width:0;height:22px;border-left:1px dashed #b0b0b4"></div>
<div class="a" style="left:515px;top:0;width:0;height:22px;border-left:1px dashed #b0b0b4"></div>
<div class="a" style="left:632px;top:0;width:0;height:22px;border-left:1px dashed #b0b0b4"></div>
<div class="a" style="left:750px;top:0;width:0;height:22px;border-left:1px dashed #b0b0b4"></div>
<div class="cb" style="left:65px"></div>
<div class="c n code" style="left:87px;width:76px;overflow:hidden">02.02.03</div>
<div class="c n" style="left:169px;width:345px;overflow:hidden">Устройство монолитной входной лестницы</div>
<div class="c n d" style="left:516px;width:116px;text-align:center">28.05.2025 09:00</div>
<div class="c n d" style="left:633px;width:118px;text-align:center">29.05.2025 18:00</div>
<div class="c n d" style="left:751px;width:95px;text-align:right">100</div>
</div>
<div class="row" style="top:374px;background:#fff">
<div class="num">18</div>
<div class="a" style="left:23px;top:0;width:10px;height:22px;background:#17365d"></div>
<div class="a" style="left:33px;top:0;width:10px;height:22px;background:#1b467a"></div>
<div class="a" style="left:43px;top:0;width:10px;height:22px;background:#20579b"></div>
<div class="a" style="left:53px;top:0;width:798px;height:22px;background:#2667b7"></div>
<div class="a" style="left:54px;top:10px;width:9px;height:2px;background:#fff"></div>
<div class="cbw" style="left:65px"></div>
<div class="c b code" style="left:86px;width:77px;overflow:hidden">OP_syn.1.1.2.</div>
<div class="c b" style="left:169px;width:345px;overflow:hidden">Монолитные работы надземной части</div>
<div class="c b bd" style="left:516px;width:116px;text-align:center">26.05.2025 09:00</div>
<div class="c b bd" style="left:633px;width:118px;text-align:center">21.06.2025 18:00</div>
<div class="c b bd" style="left:751px;width:95px;text-align:right">100</div>
</div>
</div>
<div class="a" style="left:52px;top:239.5px;width:60px;height:3px;background:#000;"></div>
<svg class="" style="left:43px;top:233px;fill:#000" width="14" height="16" viewBox="43 233 14 16"><path d="M44 241L55.6 235.3V246.7Z"/></svg>
<div class="a" style="left:109.4px;top:222.2px;width:34.6px;height:38.2px;border:2.7px solid #000;border-radius:50%;background:#fff"></div>
<div class="t" style="left:116.4px;width:20px;text-align:center;top:231.6px;font-family:'DejaVu Sans',sans-serif;font-size:20px;color:#000">1</div>
<div class="a" style="left:905px;top:140px;width:1008px;height:440px;background:#fff;"></div>
<div class="a" style="left:1913px;top:140px;width:4px;height:50px;background:#fff;"></div>
<div class="a" style="left:1913px;top:190px;width:4px;height:390px;background:#f0f0f2;"></div>
<div class="a" style="left:1913.5px;top:190px;width:3.5px;height:35px;background:#d6d6da;border-radius:2px"></div>
<div class="a" style="left:1913px;top:155px;width:4px;height:1px;background:#cfcfd3;"></div>
<div class="a" style="left:1913px;top:172px;width:4px;height:1px;background:#cfcfd3;"></div>
<div class="a" style="left:1913px;top:189px;width:4px;height:1px;background:#cfcfd3;"></div>
<div class="a" style="left:1914px;top:173px;width:1px;height:16px;background:#cfcfd3;"></div>
<div class="a" style="left:905px;top:140px;width:1008px;height:440px;overflow:hidden">
<div class="a" style="left:0;top:116px;width:1008px;height:22px;background:#fffdd0"></div>
<div class="a" style="left:0;top:14.7px;width:1008px;height:1.5px;background:#d2d2d6"></div>
<div class="a" style="left:0;top:31.7px;width:1008px;height:1.5px;background:#d2d2d6"></div>
<div class="a" style="left:0;top:48.7px;width:1008px;height:1.5px;background:#d2d2d6"></div>
<div class="a" style="left:26.0px;top:16px;width:1px;height:33px;background:#cfcfd3"></div>
<div class="a" style="left:92px;top:33px;width:1px;height:16px;background:#cfcfd3"></div>
<div class="a" style="left:157px;top:33px;width:1px;height:16px;background:#cfcfd3"></div>
<div class="a" style="left:223px;top:33px;width:1px;height:16px;background:#cfcfd3"></div>
<div class="a" style="left:288px;top:33px;width:1px;height:16px;background:#cfcfd3"></div>
<div class="a" style="left:354px;top:33px;width:1px;height:16px;background:#cfcfd3"></div>
<div class="a" style="left:419px;top:33px;width:1px;height:16px;background:#cfcfd3"></div>
<div class="a" style="left:485px;top:33px;width:1px;height:16px;background:#cfcfd3"></div>
<div class="a" style="left:550px;top:33px;width:1px;height:16px;background:#cfcfd3"></div>
<div class="a" style="left:616px;top:33px;width:1px;height:16px;background:#cfcfd3"></div>
<div class="a" style="left:682px;top:33px;width:1px;height:16px;background:#cfcfd3"></div>
<div class="a" style="left:747px;top:33px;width:1px;height:16px;background:#cfcfd3"></div>
<div class="a" style="left:813px;top:33px;width:1px;height:16px;background:#cfcfd3"></div>
<div class="a" style="left:878px;top:33px;width:1px;height:16px;background:#cfcfd3"></div>
<div class="a" style="left:944px;top:33px;width:1px;height:16px;background:#cfcfd3"></div>
<div class="a" style="left:1009px;top:33px;width:1px;height:16px;background:#cfcfd3"></div>
<div class="t" style="left:457px;width:100px;text-align:center;top:0.2px;font-size:12.5px;color:#222;line-height:14px">2025</div>
<div class="t" style="left:471px;width:100px;text-align:center;top:17px;font-size:12.5px;color:#222;line-height:14px">май</div>
<div class="t" style="left:-45px;width:60px;text-align:right;top:17px;font-size:12.5px;color:#222;line-height:14px">апрель</div>
<div class="t" style="left:-28.7px;width:30px;text-align:right;top:34px;font-size:13px;color:#1976d2;line-height:14px">30</div>
<div class="t" style="left:39.27px;width:40px;text-align:center;top:34px;font-size:13px;color:#222;line-height:14px">1</div>
<div class="t" style="left:104.83px;width:40px;text-align:center;top:34px;font-size:13px;color:#222;line-height:14px">2</div>
<div class="t" style="left:170.38px;width:40px;text-align:center;top:34px;font-size:13px;color:#222;line-height:14px">3</div>
<div class="t" style="left:235.93px;width:40px;text-align:center;top:34px;font-size:13px;color:#222;line-height:14px">4</div>
<div class="t" style="left:301.48px;width:40px;text-align:center;top:34px;font-size:13px;color:#222;line-height:14px">5</div>
<div class="t" style="left:367.03px;width:40px;text-align:center;top:34px;font-size:13px;color:#222;line-height:14px">6</div>
<div class="t" style="left:432.58px;width:40px;text-align:center;top:34px;font-size:13px;color:#222;line-height:14px">7</div>
<div class="t" style="left:498.12px;width:40px;text-align:center;top:34px;font-size:13px;color:#222;line-height:14px">8</div>
<div class="t" style="left:563.68px;width:40px;text-align:center;top:34px;font-size:13px;color:#222;line-height:14px">9</div>
<div class="t" style="left:629.22px;width:40px;text-align:center;top:34px;font-size:13px;color:#222;line-height:14px">10</div>
<div class="t" style="left:694.78px;width:40px;text-align:center;top:34px;font-size:13px;color:#222;line-height:14px">11</div>
<div class="t" style="left:760.33px;width:40px;text-align:center;top:34px;font-size:13px;color:#222;line-height:14px">12</div>
<div class="t" style="left:825.88px;width:40px;text-align:center;top:34px;font-size:13px;color:#222;line-height:14px">13</div>
<div class="t" style="left:891.43px;width:40px;text-align:center;top:34px;font-size:13px;color:#222;line-height:14px">14</div>
<div class="t" style="left:956.97px;width:40px;text-align:center;top:34px;font-size:13px;color:#222;line-height:14px">15</div>
<svg style="left:0;top:0" width="1008" height="440" viewBox="905 140 1008 440"><line x1="905" x2="1913" y1="190.2" y2="190.2" stroke="#e6e6ea" stroke-width="1.2" stroke-dasharray="1.5 1.5"/><line x1="905" x2="1913" y1="212.2" y2="212.2" stroke="#e6e6ea" stroke-width="1.2" stroke-dasharray="1.5 1.5"/><line x1="905" x2="1913" y1="234.2" y2="234.2" stroke="#e6e6ea" stroke-width="1.2" stroke-dasharray="1.5 1.5"/><line x1="905" x2="1913" y1="256.2" y2="256.2" stroke="#e6e6ea" stroke-width="1.2" stroke-dasharray="1.5 1.5"/><line x1="905" x2="1913" y1="278.2" y2="278.2" stroke="#e6e6ea" stroke-width="1.2" stroke-dasharray="1.5 1.5"/><line x1="905" x2="1913" y1="300.2" y2="300.2" stroke="#e6e6ea" stroke-width="1.2" stroke-dasharray="1.5 1.5"/><line x1="905" x2="1913" y1="322.2" y2="322.2" stroke="#e6e6ea" stroke-width="1.2" stroke-dasharray="1.5 1.5"/><line x1="905" x2="1913" y1="344.2" y2="344.2" stroke="#e6e6ea" stroke-width="1.2" stroke-dasharray="1.5 1.5"/><line x1="905" x2="1913" y1="366.2" y2="366.2" stroke="#e6e6ea" stroke-width="1.2" stroke-dasharray="1.5 1.5"/><line x1="905" x2="1913" y1="388.2" y2="388.2" stroke="#e6e6ea" stroke-width="1.2" stroke-dasharray="1.5 1.5"/><line x1="905" x2="1913" y1="410.2" y2="410.2" stroke="#e6e6ea" stroke-width="1.2" stroke-dasharray="1.5 1.5"/><line x1="905" x2="1913" y1="432.2" y2="432.2" stroke="#e6e6ea" stroke-width="1.2" stroke-dasharray="1.5 1.5"/><line x1="905" x2="1913" y1="454.2" y2="454.2" stroke="#e6e6ea" stroke-width="1.2" stroke-dasharray="1.5 1.5"/><line x1="905" x2="1913" y1="476.2" y2="476.2" stroke="#e6e6ea" stroke-width="1.2" stroke-dasharray="1.5 1.5"/><line x1="905" x2="1913" y1="498.2" y2="498.2" stroke="#e6e6ea" stroke-width="1.2" stroke-dasharray="1.5 1.5"/><line x1="905" x2="1913" y1="520.2" y2="520.2" stroke="#e6e6ea" stroke-width="1.2" stroke-dasharray="1.5 1.5"/><line x1="905" x2="1913" y1="542.2" y2="542.2" stroke="#e6e6ea" stroke-width="1.2" stroke-dasharray="1.5 1.5"/><line x1="905" x2="1913" y1="564.2" y2="564.2" stroke="#e6e6ea" stroke-width="1.2" stroke-dasharray="1.5 1.5"/><line x1="905" x2="1913" y1="586.2" y2="586.2" stroke="#e6e6ea" stroke-width="1.2" stroke-dasharray="1.5 1.5"/><rect x="905" y="193.4" width="1008" height="3.6" fill="#aeaeae"/><rect x="905" y="215.4" width="1008" height="3.6" fill="#aeaeae"/><rect x="905" y="325.4" width="1008" height="3.6" fill="#aeaeae"/><path d="M905 567.9H1627V575.5L1622 571.4H905Z" fill="#aeaeae"/><path d="M956.1 202H1930.0V206.2H961.6L956.1 210Z" fill="#000"/><path d="M956.1 224H1930.0V228.2H961.6L956.1 232Z" fill="#000"/><path d="M956.1 246H1242.9V254L1237.4 250.2H961.6L956.1 254Z" fill="#000"/><path d="M1283.8 334H1930.0V338.2H1289.3L1283.8 342Z" fill="#000"/><path d="M1283.8 356H1832.8V364L1827.3 360.2H1289.3L1283.8 364Z" fill="#000"/><rect x="956.1" y="269" width="24.6" height="7" fill="#0878e0"/><rect x="956.1" y="269" width="4.2" height="7" fill="#000"/><rect x="976.5" y="269" width="4.2" height="7" fill="#000"/><rect x="1044.3" y="291" width="65.5" height="7" fill="#0878e0"/><rect x="1044.3" y="291" width="4.2" height="7" fill="#000"/><rect x="1105.6" y="291" width="4.2" height="7" fill="#000"/><rect x="1152.7" y="313" width="90.1" height="7" fill="#0878e0"/><path d="M1156.7 318.6C1159.0 318.6 1160.2 313.9 1162.5 313.9C1164.8 313.9 1165.9 318.6 1168.2 318.6C1170.5 318.6 1171.7 313.9 1174.0 313.9C1176.3 313.9 1177.4 318.6 1179.7 318.6C1182.0 318.6 1183.1 313.9 1185.4 313.9C1187.7 313.9 1188.9 318.6 1191.2 318.6C1193.5 318.6 1194.6 313.9 1196.9 313.9C1199.2 313.9 1200.4 318.6 1202.7 318.6C1205.0 318.6 1206.1 313.9 1208.4 313.9C1210.7 313.9 1211.9 318.6 1214.2 318.6C1216.4 318.6 1217.6 313.9 1219.9 313.9C1222.2 313.9 1223.3 318.6 1225.6 318.6C1227.9 318.6 1229.1 313.9 1231.4 313.9C1233.7 313.9 1234.8 318.6 1237.1 318.6C1239.4 318.6 1240.6 313.9 1242.9 313.9" fill="none" stroke="#fff" stroke-width="1.4"/><rect x="1152.7" y="313" width="4.2" height="7" fill="#000"/><rect x="1283.8" y="379" width="90.1" height="7" fill="#0878e0"/><rect x="1414.9" y="401" width="90.1" height="7" fill="#0878e0"/><rect x="1546.0" y="423" width="90.1" height="7" fill="#0878e0"/><rect x="1677.1" y="445" width="90.1" height="7" fill="#0878e0"/><rect x="1808.2" y="467" width="24.6" height="7" fill="#0878e0"/><path d="M1242.9 318V324H1269.9V382.5H1279.8" fill="none" stroke="#111" stroke-width="1.5"/><path d="M1283.8 382.5L1275.8 378.8V386.2Z" fill="#000"/><path d="M1374.0 384V390H1401.0V404.5H1410.9" fill="none" stroke="#111" stroke-width="1.5"/><path d="M1414.9 404.5L1406.9 400.8V408.2Z" fill="#000"/><path d="M1505.1 406V412H1532.1V426.5H1542.0" fill="none" stroke="#111" stroke-width="1.5"/><path d="M1546.0 426.5L1538.0 422.8V430.2Z" fill="#000"/><path d="M1636.2 428V434H1663.2V448.5H1673.1" fill="none" stroke="#111" stroke-width="1.5"/><path d="M1677.1 448.5L1669.1 444.8V452.2Z" fill="#000"/><path d="M1767.3 450V456H1794.3V470.5H1804.2" fill="none" stroke="#111" stroke-width="1.5"/><path d="M1808.2 470.5L1800.2 466.8V474.2Z" fill="#000"/><path d="M1832.8 472V478H1930" fill="none" stroke="#111" stroke-width="1.5"/></svg>
<div class="gl" style="left:358.9px;top:99.1px;font-weight:700;color:#505050;font-size:12px;letter-spacing:-0.1px;">Земляные работы</div>
<div class="gl" style="left:96.7px;top:121.1px;">Вертикальная планировка территории</div>
<div class="gl" style="left:225.8px;top:143.1px;">Устройство котлована</div>
<div class="gl" style="left:358.9px;top:165.1px;">Устройство песчаного основания</div>
<div class="gl" style="left:948.8px;top:209.1px;font-weight:700;color:#505050;font-size:12px;letter-spacing:-0.1px;">Фундамент</div>
<div class="gl" style="left:490.0px;top:231.1px;">Устройство буронабивных свай захватка 1</div>
<div class="gl" style="left:621.1px;top:253.1px;">Устройство буронабивных свай захватка 2</div>
<div class="gl" style="left:752.2px;top:275.1px;">Устройство буронабивных свай захватка 3</div>
<div class="gl" style="left:883.3px;top:297.1px;">Устройство буронабивных свай захватка 4</div>
<div class="gl" style="left:948.8px;top:319.1px;">Устройство фундаментной плиты</div>
</div>
<div class="a" style="left:44px;top:579px;width:1873px;height:1px;background:#fff;"></div>
<div class="a" style="left:44px;top:580px;width:1873px;height:1.5px;background:#c4c4c8;"></div>
<div class="a" style="left:44px;top:581.5px;width:1873px;height:326.5px;background:#fff;"></div>
<div class="a" style="left:44px;top:606px;width:1873px;height:1px;background:#c6c6ca;"></div>
<div class="t" style="left:52.0px;top:588.1px;font-size:14px;color:#1a1a1a;font-weight:400;letter-spacing:0.578px;">Мультивиджет</div>
<svg class="ic" style="left:1827px;top:587.5px;stroke:#1a1a1a;stroke-width:1.7" width="16" height="13" viewBox="0 0 16 13"><rect x="1" y="4.5" width="11" height="7.5" rx="1.8"/><path d="M3 1.2H12.5A2 2 0 0 1 14.5 3.2V10"/></svg>
<div class="a" style="left:1851px;top:600px;width:16px;height:1.8px;background:#1a1a1a;"></div>
<svg class="ic" style="left:1875px;top:585.6px;stroke:#1a1a1a;stroke-width:1.7;stroke-linejoin:miter" width="16" height="16" viewBox="0 0 16 16"><path d="M1 15L15 1M8.5 1H15V7.5M1 8.5V15H7.5"/></svg>
<svg class="ic" style="left:1899px;top:585.6px;stroke:#1a1a1a;stroke-width:1.7" width="15" height="16" viewBox="0 0 15 16"><path d="M1 1L14 15M14 1L1 15"/></svg>
<div class="t" style="left:91.0px;top:621.5px;font-size:15.5px;color:#1976d2;font-weight:400;letter-spacing:1.150px;">Карточка работы</div>
<div class="t" style="left:323.0px;top:621.5px;font-size:15.5px;color:#333;font-weight:400;letter-spacing:1.058px;">Связи работы</div>
<div class="t" style="left:529.0px;top:621.5px;font-size:15.5px;color:#333;font-weight:400;letter-spacing:1.106px;">Связанные графики</div>
<div class="t" style="left:785.0px;top:621.5px;font-size:15.5px;color:#333;font-weight:400;letter-spacing:1.410px;">Справочники</div>
<div class="t" style="left:987.0px;top:621.5px;font-size:15.5px;color:#333;font-weight:400;letter-spacing:1.031px;">Суточное планирование</div>
<div class="t" style="left:1277.0px;top:621.5px;font-size:15.5px;color:#333;font-weight:400;letter-spacing:1.241px;">Фото / Документация</div>
<div class="t" style="left:1546.0px;top:621.5px;font-size:15.5px;color:#333;font-weight:400;letter-spacing:1.095px;">Запросы и поручения</div>
<div class="t" style="left:1816.0px;top:621.5px;font-size:15.5px;color:#333;font-weight:400;letter-spacing:0.619px;">Табели</div>
<div class="a" style="left:44px;top:649px;width:232px;height:2px;background:#1976d2;"></div>
<div class="t" style="left:60.5px;top:671.6px;font-size:14px;color:#111;font-weight:700;letter-spacing:-0.541px;">Тип</div>
<div class="t" style="left:60.5px;top:701.7px;font-size:14px;color:#111;font-weight:700;letter-spacing:-0.993px;">Шифр</div>
<div class="t" style="left:60.5px;top:731.4px;font-size:14px;color:#111;font-weight:700;letter-spacing:-0.237px;">Статус</div>
<div class="inp" style="left:119px;top:667px;width:163px;height:22px;"></div>
<div class="inp" style="left:119px;top:697px;width:163px;height:22px;"></div>
<div class="inp" style="left:119px;top:727px;width:163px;height:22px;"></div>
<div class="t" style="left:132.0px;top:670.7px;font-size:14px;color:#222;font-weight:400;letter-spacing:0.700px;">Работа</div>
<div class="t" style="left:132.0px;top:700.8px;font-size:14px;color:#222;font-weight:400;letter-spacing:0.116px;">01.01</div>
<div class="t" style="left:132.0px;top:730.8px;font-size:14px;color:#222;font-weight:400;letter-spacing:0.671px;">Завершена</div>
<svg class="" style="left:253.5px;top:676.0999999999999px;fill:#444" width="9.6" height="4.8" viewBox="0 0 9.6 4.8"><path d="M0 0H9.6L4.8 4.8Z"/></svg>
<svg class="" style="left:253.5px;top:736.0999999999999px;fill:#444" width="9.6" height="4.8" viewBox="0 0 9.6 4.8"><path d="M0 0H9.6L4.8 4.8Z"/></svg>
<div class="inp" style="left:290px;top:667px;width:529px;height:50px;"></div>
<div class="a" style="left:387px;top:666px;width:12px;height:3px;background:#fff;"></div>
<div class="t" style="left:302.8px;top:681.4px;font-size:17.5px;color:#111;font-weight:700;letter-spacing:0.399px;">Вертикальная планировка территории</div>
<div class="t" style="left:290.4px;top:729.5px;font-size:14.5px;color:#222;font-weight:400;letter-spacing:0.141px;">Сценарий</div>
<div class="a" style="left:363px;top:725px;width:456px;height:22px;background:#f0f0f2;border-radius:4px"></div>
<div class="t" style="left:480.0px;top:729.5px;font-size:13px;color:#222;font-weight:400;letter-spacing:0.418px;">Сценария нет</div>
<svg class="ic" style="left:796px;top:726px;stroke:#b6b6ba" width="20" height="20" viewBox="796 726 20 20"><path d="M812.30 736.10A3.5 3.5 0 0 0 809.15 730.64A3.5 3.5 0 0 0 802.85 730.64A3.5 3.5 0 0 0 799.70 736.10A3.5 3.5 0 0 0 802.85 741.56A3.5 3.5 0 0 0 809.15 741.56A3.5 3.5 0 0 0 812.30 736.10Z" style="stroke-width:1.5"/><path d="M802.8 733.5L805.2 736.2L802.8 738.9M806.2 733.5L808.6 736.2L806.2 738.9" style="stroke-width:1.3"/></svg>
<div class="a" style="left:827px;top:667px;width:146px;height:82px;border:1px solid #5a9be0;border-radius:5px;background:#fff;overflow:hidden"><div style="height:33px;background:#5e9fe0"></div></div>
<div class="a" style="left:859.5px;top:659px;width:9px;height:15px;border:1.4px solid #5e9fe0;border-radius:2.5px;background:#fff"></div>
<div class="a" style="left:931.5px;top:659px;width:9px;height:15px;border:1.4px solid #5e9fe0;border-radius:2.5px;background:#fff"></div>
<div class="t" style="left:851.5px;top:679.0px;font-size:13px;color:#fff;font-weight:400;letter-spacing:0.192px;text-decoration:underline">PLAN-R: 7 дней</div>
<svg class="ic" style="left:838px;top:706px;stroke:#555" width="20" height="20" viewBox="838 706 20 20"><path d="M843 710.6L852 719.6" style="stroke-width:1.5"/><path d="M840.7 710.9L842.6 707.9L844.4 711.4Z" style="stroke-width:1.1"/><path d="M846.7 719.4C847.4 722.4 850 724 852.4 723.6C855.1 723 856.3 720.4 855.4 717.9C854.8 716.2 853.4 715 851.9 714.6" style="stroke-width:1.6"/></svg>
<div class="inp" style="left:864px;top:705px;width:72px;height:22px;"></div>
<div class="t" style="left:895.6px;top:708.3px;font-size:15px;color:#111;font-weight:400;letter-spacing:0.000px;">8</div>
<div class="t" style="left:943.6px;top:710.4px;font-size:12.5px;color:#222;font-weight:400;letter-spacing:0.015px;">ч.</div>
<div class="t" style="left:841.8px;top:732.0px;font-size:12px;color:#111;font-weight:400;letter-spacing:0.400px;">Календарных: 1 дн.</div>
<div class="a" style="left:52px;top:757px;width:921px;height:24px;background:#1976d2;"></div>
<div class="t" style="left:71.3px;top:761.3px;font-size:15px;color:#fff;font-weight:400;letter-spacing:0.595px;">01.05.2025 09:00</div>
<div class="t" style="left:495.5px;top:762.1px;font-size:14px;color:#fff;font-weight:400;letter-spacing:0.326px;">100 %</div>
<div class="t" style="left:818.6px;top:761.3px;font-size:15px;color:#fff;font-weight:400;letter-spacing:0.481px;">01.05.2025 18:00</div>
<div class="t" style="left:52.0px;top:799.0px;font-size:14.5px;color:#111;font-weight:700;letter-spacing:-0.253px;">Ограничения</div>
<div class="a" style="left:205px;top:804px;width:768px;height:3px;background:#b6b6be;border-radius:1.5px"></div>
<div class="t" style="left:52.0px;top:827.4px;font-size:14.5px;color:#222;font-weight:400;letter-spacing:0.015px;">Начало</div>
<div class="inp" style="left:119px;top:822px;width:149px;height:22px;"></div>
<svg class="" style="left:239.2px;top:830.8px;fill:#444" width="9.6" height="4.8" viewBox="0 0 9.6 4.8"><path d="M0 0H9.6L4.8 4.8Z"/></svg>
<div class="t" style="left:727.0px;top:827.4px;font-size:14.5px;color:#222;font-weight:400;letter-spacing:0.294px;">Окончание</div>
<div class="inp" style="left:819px;top:822px;width:150px;height:22px;"></div>
<svg class="" style="left:939.5px;top:830.8px;fill:#444" width="9.6" height="4.8" viewBox="0 0 9.6 4.8"><path d="M0 0H9.6L4.8 4.8Z"/></svg>
<div class="a" style="left:52px;top:860px;width:40px;height:20px;background:#1976d2;border-radius:4px;box-shadow:0 2px 3px rgba(0,0,0,.3)"></div>
<svg class="ic" style="left:64px;top:864px;stroke:#fff;stroke-width:1.3" width="14" height="12" viewBox="0 0 14 12"><path d="M6 1L1 6L6 11M12 1L7 6L12 11"/></svg>
<div class="t" style="left:108.4px;top:864.2px;font-size:14.5px;color:#222;font-weight:400;letter-spacing:0.222px;">Начало как можно раньше</div>
<div class="t" style="left:716.3px;top:864.2px;font-size:14.5px;color:#222;font-weight:400;letter-spacing:0.379px;">Окончание как можно позже</div>
<div class="a" style="left:933px;top:860px;width:40px;height:20px;background:#9e9e9e;border-radius:4px;box-shadow:0 2px 3px rgba(0,0,0,.25)"></div>
<svg class="ic" style="left:946px;top:864px;stroke:#fff;stroke-width:1.3" width="14" height="12" viewBox="0 0 14 12"><path d="M2 1L7 6L2 11M8 1L13 6L8 11"/></svg>
<div class="a" style="left:44px;top:890px;width:1873px;height:1px;background:#d0d0d4;"></div>
<div class="a" style="left:981px;top:659px;width:1px;height:231px;background:#c6c6ca;"></div>
<div class="t" style="left:990.0px;top:681.1px;font-size:14px;color:#111;font-weight:700;letter-spacing:-0.525px;">Атрибуты</div>
<div class="inp" style="left:1080px;top:667px;width:840px;height:40px;border-right:none;border-radius:5px 0 0 5px;width:830px;border-radius:5px"></div>
<div class="t" style="left:1092.0px;top:679.2px;font-size:14.5px;color:#888;font-weight:400;letter-spacing:0.705px;">Поиск</div>
<div class="t" style="left:990.0px;top:730.2px;font-size:14.5px;color:#222;font-weight:400;letter-spacing:-0.128px;">Шифр</div>
<div class="t" style="left:1455.0px;top:730.2px;font-size:14.5px;color:#222;font-weight:400;letter-spacing:-0.197px;">01.01</div>
<div class="a" style="left:986px;top:757px;width:929px;height:1px;background:#c6c6ca;"></div>
<div class="t" style="left:990.0px;top:772.2px;font-size:14.5px;color:#222;font-weight:400;letter-spacing:0.226px;">Наименование</div>
<div class="t" style="left:1455.0px;top:772.2px;font-size:14.5px;color:#222;font-weight:400;letter-spacing:0.437px;">Вертикальная планировка территории</div>
<div class="a" style="left:986px;top:799px;width:929px;height:1px;background:#c6c6ca;"></div>
<div class="t" style="left:990.0px;top:814.2px;font-size:14.5px;color:#222;font-weight:400;letter-spacing:0.149px;">Старт</div>
<div class="t" style="left:1455.0px;top:814.2px;font-size:14.5px;color:#222;font-weight:400;letter-spacing:0.274px;">01.05.2025 09:00</div>
<div class="a" style="left:986px;top:841px;width:929px;height:1px;background:#c6c6ca;"></div>
<div class="t" style="left:990.0px;top:856.2px;font-size:14.5px;color:#222;font-weight:400;letter-spacing:0.284px;">Финиш</div>
<div class="t" style="left:1455.0px;top:856.2px;font-size:14.5px;color:#222;font-weight:400;letter-spacing:0.174px;">01.05.2025 18:00</div>
<div class="a" style="left:986px;top:883px;width:929px;height:1px;background:#c6c6ca;"></div>
</body></html>
